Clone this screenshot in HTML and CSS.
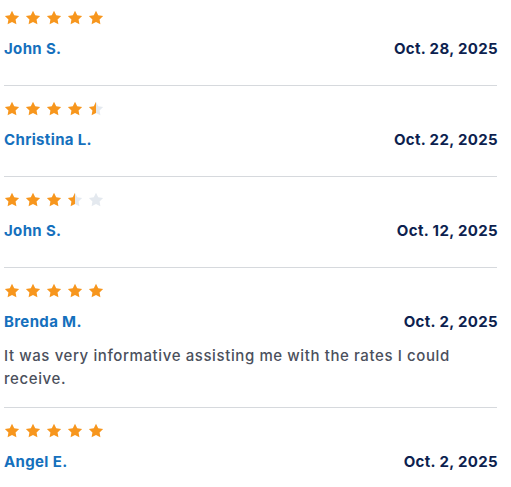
FILE: index.html
```html
<!DOCTYPE html>
<html lang="en">
<head>
<meta charset="utf-8">
<title>Reviews</title>
<link rel="stylesheet" href="styles.css">
</head>
<body>
<svg class="defs" width="0" height="0" aria-hidden="true">
  <defs>
    <linearGradient id="half" x1="0" x2="1" y1="0" y2="0">
      <stop offset="50%" stop-color="#f7961d"/>
      <stop offset="50%" stop-color="#e4e9ef"/>
    </linearGradient>
    <path id="star" d="M12 1.2l3.3 6.7 7.4 1.05-5.35 5.2 1.26 7.35L12 18.05l-6.61 3.45 1.26-7.350-5.35-5.2 7.4-1.05z"/>
  </defs>
</svg>
<ul class="reviews">
  <li class="review">
    <div class="stars">
      <svg class="star full" viewBox="0 0 24 24"><use href="#star"/></svg>
      <svg class="star full" viewBox="0 0 24 24"><use href="#star"/></svg>
      <svg class="star full" viewBox="0 0 24 24"><use href="#star"/></svg>
      <svg class="star full" viewBox="0 0 24 24"><use href="#star"/></svg>
      <svg class="star full" viewBox="0 0 24 24"><use href="#star"/></svg>
    </div>
    <div class="meta"><span class="name">John S.</span><span class="date">Oct. 28, 2025</span></div>
  </li>
  <li class="review">
    <div class="stars">
      <svg class="star full" viewBox="0 0 24 24"><use href="#star"/></svg>
      <svg class="star full" viewBox="0 0 24 24"><use href="#star"/></svg>
      <svg class="star full" viewBox="0 0 24 24"><use href="#star"/></svg>
      <svg class="star full" viewBox="0 0 24 24"><use href="#star"/></svg>
      <svg class="star halfstar" viewBox="0 0 24 24"><use href="#star"/></svg>
    </div>
    <div class="meta"><span class="name">Christina L.</span><span class="date">Oct. 22, 2025</span></div>
  </li>
  <li class="review">
    <div class="stars">
      <svg class="star full" viewBox="0 0 24 24"><use href="#star"/></svg>
      <svg class="star full" viewBox="0 0 24 24"><use href="#star"/></svg>
      <svg class="star full" viewBox="0 0 24 24"><use href="#star"/></svg>
      <svg class="star halfstar" viewBox="0 0 24 24"><use href="#star"/></svg>
      <svg class="star empty" viewBox="0 0 24 24"><use href="#star"/></svg>
    </div>
    <div class="meta"><span class="name">John S.</span><span class="date">Oct. 12, 2025</span></div>
  </li>
  <li class="review">
    <div class="stars">
      <svg class="star full" viewBox="0 0 24 24"><use href="#star"/></svg>
      <svg class="star full" viewBox="0 0 24 24"><use href="#star"/></svg>
      <svg class="star full" viewBox="0 0 24 24"><use href="#star"/></svg>
      <svg class="star full" viewBox="0 0 24 24"><use href="#star"/></svg>
      <svg class="star full" viewBox="0 0 24 24"><use href="#star"/></svg>
    </div>
    <div class="meta"><span class="name">Brenda M.</span><span class="date">Oct. 2, 2025</span></div>
    <p class="comment">It was very informative assisting me with the rates I could receive.</p>
  </li>
  <li class="review">
    <div class="stars">
      <svg class="star full" viewBox="0 0 24 24"><use href="#star"/></svg>
      <svg class="star full" viewBox="0 0 24 24"><use href="#star"/></svg>
      <svg class="star full" viewBox="0 0 24 24"><use href="#star"/></svg>
      <svg class="star full" viewBox="0 0 24 24"><use href="#star"/></svg>
      <svg class="star full" viewBox="0 0 24 24"><use href="#star"/></svg>
    </div>
    <div class="meta"><span class="name">Angel E.</span><span class="date">Oct. 2, 2025</span></div>
  </li>
</ul>
</body>
</html>
```

FILE: styles.css
```css
html, body {
  margin: 0;
  padding: 0;
  background: #ffffff;
}

body {
  font-family: Inter, "Liberation Sans", sans-serif;
  overflow: hidden;
}

.defs {
  position: absolute;
  width: 0;
  height: 0;
}

.reviews {
  list-style: none;
  margin: 0;
  padding: 0 0 0 4px;
  width: 493px;
}

.review {
  padding: 15px 0 17px;
  border-bottom: 1px solid #d6d9dd;
}

.review:first-child {
  padding-top: 10px;
}

.review:last-child {
  border-bottom: none;
}

.stars {
  display: flex;
  gap: 5px;
  height: 16px;
}

.star {
  width: 16px;
  height: 16px;
  display: block;
}

.star.full { fill: #f7961d; }
.star.empty { fill: #e4e9ef; }
.star.halfstar { fill: url(#half); }

.meta {
  display: flex;
  justify-content: space-between;
  align-items: baseline;
  margin-top: 11px;
  margin-bottom: 8px;
  line-height: 23px;
  font-size: 15px;
  font-weight: 700;
  letter-spacing: 0.35px;
}

.name {
  color: #1570bd;
}

.date {
  color: #0d1f4f;
  margin-right: -1px;
}

.comment {
  margin: 11px 0 0;
  font-size: 15px;
  line-height: 23px;
  font-weight: 500;
  letter-spacing: 0.6px;
  color: #4b505c;
}
```
